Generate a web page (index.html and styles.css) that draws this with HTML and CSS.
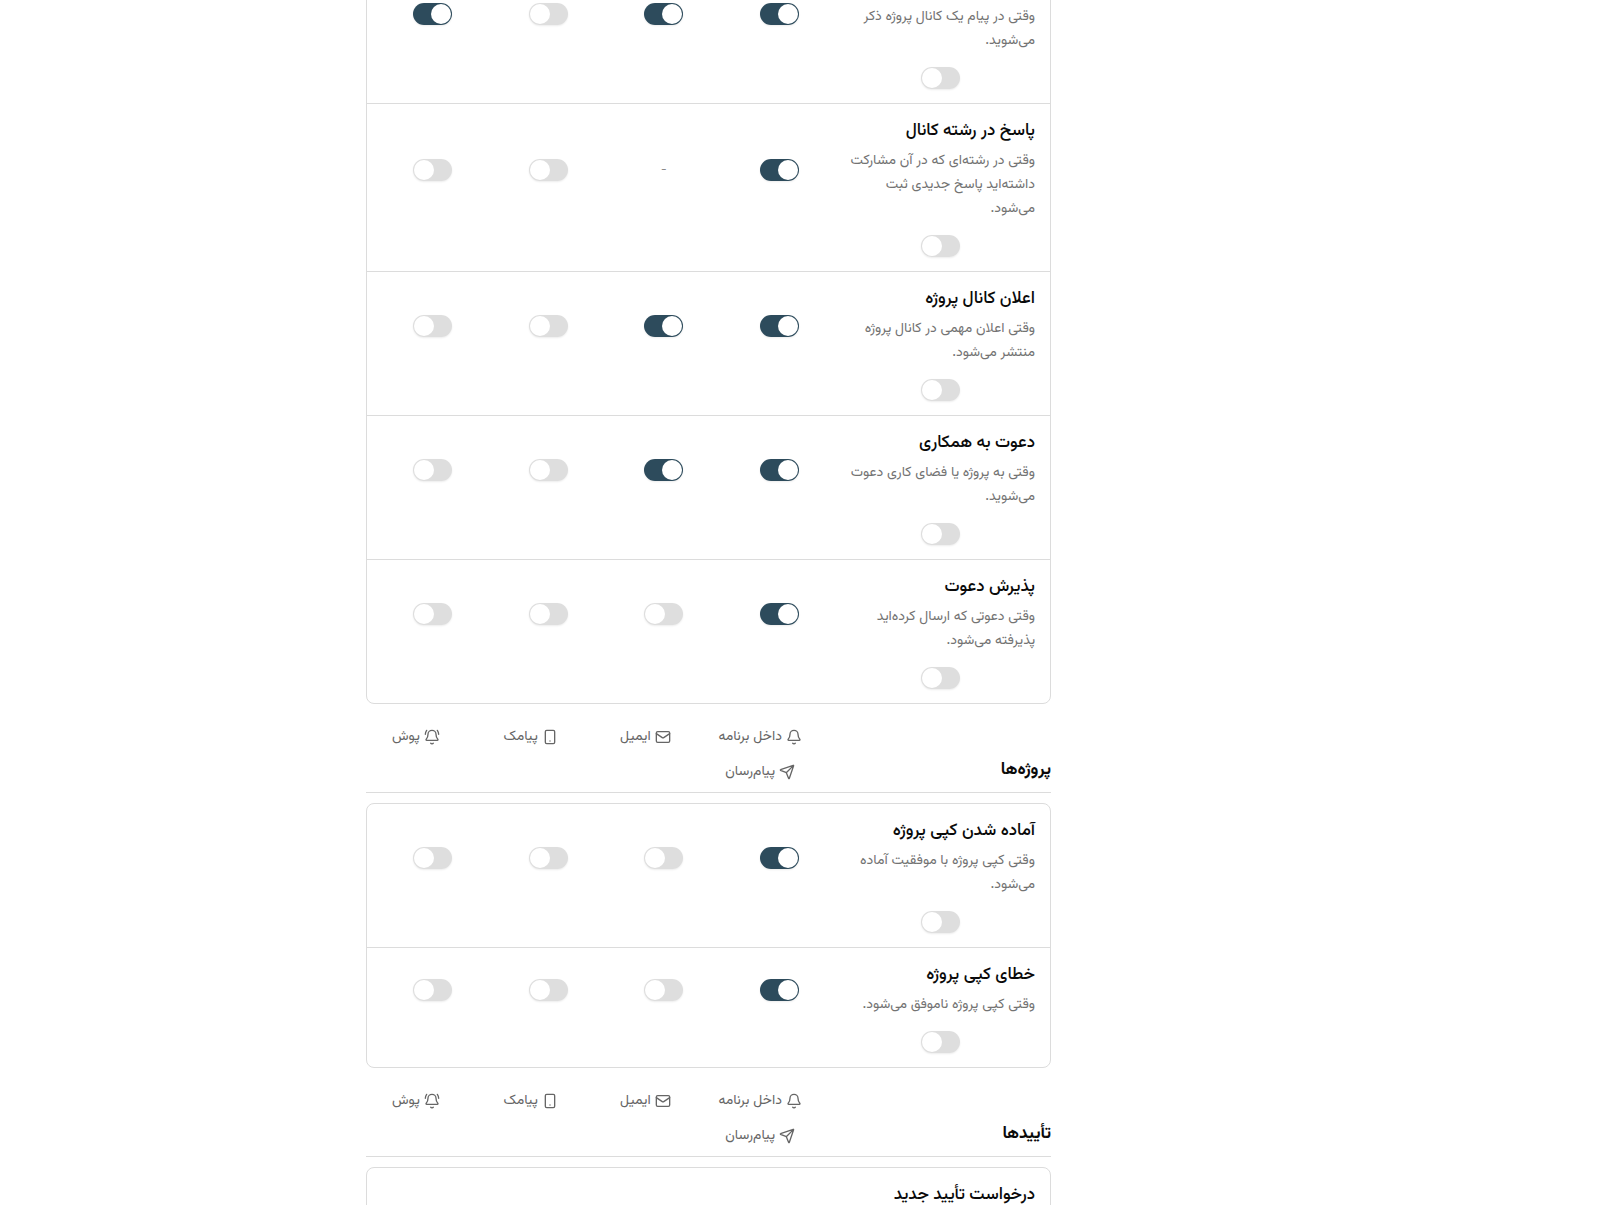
FILE: index.html
```html
<!DOCTYPE html>
<html lang="fa" dir="rtl">
<head>
<meta charset="utf-8">
<meta name="viewport" content="width=device-width, initial-scale=1">
<title>اعلان‌ها</title>
<link rel="stylesheet" href="styles.css">
</head>
<body>
<svg class="sprite" aria-hidden="true">
  <symbol id="bell" viewBox="0 0 24 24"><path d="M10 21.3a2.4 2.4 0 0 0 4 0M3.3 15.3A1 1 0 0 0 4 17h16a1 1 0 0 0 .7-1.7C19.4 14 18 12.5 18 8A6 6 0 0 0 6 8c0 4.5-1.4 6-2.7 7.3Z"/></symbol>
  <symbol id="mail" viewBox="0 0 24 24"><rect x="2" y="4" width="20" height="16" rx="2"/><path d="m2 7 8.9 6a2 2 0 0 0 2.2 0L22 7"/></symbol>
  <symbol id="phone" viewBox="0 0 24 24"><rect x="5" y="2" width="14" height="20" rx="2"/><path d="M12 18h.01"/></symbol>
  <symbol id="ring" viewBox="0 0 24 24"><path d="M10 21.3a2.4 2.4 0 0 0 4 0M3.3 15.3A1 1 0 0 0 4 17h16a1 1 0 0 0 .7-1.7C19.4 14 18 12.5 18 8A6 6 0 0 0 6 8c0 4.5-1.4 6-2.7 7.3ZM22 8c0-2.3-.8-4.3-2-6M4 2C2.8 3.7 2 5.7 2 8"/></symbol>
  <symbol id="send" viewBox="0 0 24 24"><path d="M14.5 21.7a.5.5 0 0 0 .9 0l6.5-19a.5.5 0 0 0-.6-.6l-19 6.5a.5.5 0 0 0 0 .9l7.9 3.2a2 2 0 0 1 1.1 1.1ZM21.9 2.1 10.9 13.1"/></symbol>
</svg>
<main class="page">
  <div class="settings">
    <section class="card">
      <div class="row row-continued">
        <div class="info"><p class="desc">وقتی در پیام یک کانال پروژه ذکر می‌شوید.</p></div>
        <input class="switch" type="checkbox" aria-label="داخل برنامه" checked>
        <input class="switch" type="checkbox" aria-label="ایمیل" checked>
        <input class="switch" type="checkbox" aria-label="پیامک">
        <input class="switch" type="checkbox" aria-label="پوش" checked>
        <input class="switch" type="checkbox" aria-label="پیام‌رسان">
      </div>
      <div class="row">
        <div class="info"><h3 class="title">پاسخ در رشته کانال</h3><p class="desc">وقتی در رشته‌ای که در آن مشارکت داشته‌اید پاسخ جدیدی ثبت می‌شود.</p></div>
        <input class="switch" type="checkbox" aria-label="داخل برنامه" checked>
        <span class="none">-</span>
        <input class="switch" type="checkbox" aria-label="پیامک">
        <input class="switch" type="checkbox" aria-label="پوش">
        <input class="switch" type="checkbox" aria-label="پیام‌رسان">
      </div>
      <div class="row">
        <div class="info"><h3 class="title">اعلان کانال پروژه</h3><p class="desc">وقتی اعلان مهمی در کانال پروژه منتشر می‌شود.</p></div>
        <input class="switch" type="checkbox" aria-label="داخل برنامه" checked>
        <input class="switch" type="checkbox" aria-label="ایمیل" checked>
        <input class="switch" type="checkbox" aria-label="پیامک">
        <input class="switch" type="checkbox" aria-label="پوش">
        <input class="switch" type="checkbox" aria-label="پیام‌رسان">
      </div>
      <div class="row">
        <div class="info"><h3 class="title">دعوت به همکاری</h3><p class="desc">وقتی به پروژه یا فضای کاری دعوت می‌شوید.</p></div>
        <input class="switch" type="checkbox" aria-label="داخل برنامه" checked>
        <input class="switch" type="checkbox" aria-label="ایمیل" checked>
        <input class="switch" type="checkbox" aria-label="پیامک">
        <input class="switch" type="checkbox" aria-label="پوش">
        <input class="switch" type="checkbox" aria-label="پیام‌رسان">
      </div>
      <div class="row">
        <div class="info"><h3 class="title">پذیرش دعوت</h3><p class="desc">وقتی دعوتی که ارسال کرده‌اید پذیرفته می‌شود.</p></div>
        <input class="switch" type="checkbox" aria-label="داخل برنامه" checked>
        <input class="switch" type="checkbox" aria-label="ایمیل">
        <input class="switch" type="checkbox" aria-label="پیامک">
        <input class="switch" type="checkbox" aria-label="پوش">
        <input class="switch" type="checkbox" aria-label="پیام‌رسان">
      </div>
    </section>

    <header class="head">
      <h2 class="heading">پروژه‌ها</h2>
      <div class="channels">
        <span class="channel"><svg class="icon"><use href="#bell"/></svg>داخل برنامه</span>
        <span class="channel"><svg class="icon"><use href="#mail"/></svg>ایمیل</span>
        <span class="channel"><svg class="icon"><use href="#phone"/></svg>پیامک</span>
        <span class="channel"><svg class="icon"><use href="#ring"/></svg>پوش</span>
        <span class="channel"><svg class="icon"><use href="#send"/></svg>پیام‌رسان</span>
      </div>
    </header>
    <section class="card">
      <div class="row">
        <div class="info"><h3 class="title">آماده شدن کپی پروژه</h3><p class="desc">وقتی کپی پروژه با موفقیت آماده می‌شود.</p></div>
        <input class="switch" type="checkbox" aria-label="داخل برنامه" checked>
        <input class="switch" type="checkbox" aria-label="ایمیل">
        <input class="switch" type="checkbox" aria-label="پیامک">
        <input class="switch" type="checkbox" aria-label="پوش">
        <input class="switch" type="checkbox" aria-label="پیام‌رسان">
      </div>
      <div class="row">
        <div class="info"><h3 class="title">خطای کپی پروژه</h3><p class="desc">وقتی کپی پروژه ناموفق می‌شود.</p></div>
        <input class="switch" type="checkbox" aria-label="داخل برنامه" checked>
        <input class="switch" type="checkbox" aria-label="ایمیل">
        <input class="switch" type="checkbox" aria-label="پیامک">
        <input class="switch" type="checkbox" aria-label="پوش">
        <input class="switch" type="checkbox" aria-label="پیام‌رسان">
      </div>
    </section>

    <header class="head">
      <h2 class="heading">تأییدها</h2>
      <div class="channels">
        <span class="channel"><svg class="icon"><use href="#bell"/></svg>داخل برنامه</span>
        <span class="channel"><svg class="icon"><use href="#mail"/></svg>ایمیل</span>
        <span class="channel"><svg class="icon"><use href="#phone"/></svg>پیامک</span>
        <span class="channel"><svg class="icon"><use href="#ring"/></svg>پوش</span>
        <span class="channel"><svg class="icon"><use href="#send"/></svg>پیام‌رسان</span>
      </div>
    </header>
    <section class="card">
      <div class="row">
        <div class="info"><h3 class="title">درخواست تأیید جدید</h3></div>
      </div>
    </section>
  </div>
</main>
</body>
</html>
```
FILE: styles.css
```css
* { box-sizing: border-box; }

body {
  margin: 0;
  background: #fff;
  color: #0a0a0a;
  font-family: Vazirmatn, "Noto Sans Arabic", "DejaVu Sans", sans-serif;
}

h2, h3, p { margin: 0; }

.sprite { display: none; }

.page {
  height: 100vh;
  overflow: hidden;
  padding-inline-start: 183px;
}

/* The list is scrolled part-way into its first row. */
.settings {
  max-width: 685px;
  margin: -41px auto 0;
}

.card {
  border: 1px solid #dcdcdc;
  border-radius: 8px;
}

.row {
  display: grid;
  grid-template-columns: 190px repeat(4, 1fr);
  gap: 14px 15px;
  align-items: center;
  justify-items: center;
  padding: 14px 15px;
}

.row + .row { border-top: 1px solid #dcdcdc; }

.row-continued .info { padding-top: 31px; }

.info { width: 100%; }

.title {
  margin-bottom: 5px;
  font-size: 17px;
  font-weight: 500;
  line-height: 26px;
}

.desc {
  color: #737373;
  font-size: 14px;
  line-height: 24px;
}

.none {
  color: #8a8a8a;
  font-size: 12px;
  line-height: 22px;
}

.switch {
  appearance: none;
  width: 39px;
  height: 22px;
  margin: 0;
  padding: 1px;
  border-radius: 11px;
  background: #dedede;
  box-shadow: 0 1px 2px rgba(0, 0, 0, 0.08);
  direction: ltr;
  cursor: pointer;
}

.switch::before {
  content: "";
  display: block;
  width: 20px;
  height: 20px;
  border-radius: 50%;
  background: #fff;
}

.switch:checked { background: #2d4b5c; }

.switch:checked::before { margin-left: 17px; }

.head {
  display: flex;
  align-items: flex-end;
  gap: 15px;
  margin: 23px 0 10px;
  padding-bottom: 10px;
  border-bottom: 1px solid #dcdcdc;
}

.heading {
  flex: 1;
  font-size: 17px;
  font-weight: 700;
  line-height: 24px;
}

.channels {
  display: grid;
  grid-template-columns: repeat(4, 1fr);
  gap: 15px;
  width: 444px;
}

.channel {
  display: flex;
  align-items: center;
  justify-content: center;
  gap: 4px;
  color: #666;
  font-size: 14px;
  line-height: 20px;
}

.icon {
  width: 16px;
  height: 16px;
  fill: none;
  stroke: currentColor;
  stroke-width: 2;
  stroke-linecap: round;
  stroke-linejoin: round;
}
```
